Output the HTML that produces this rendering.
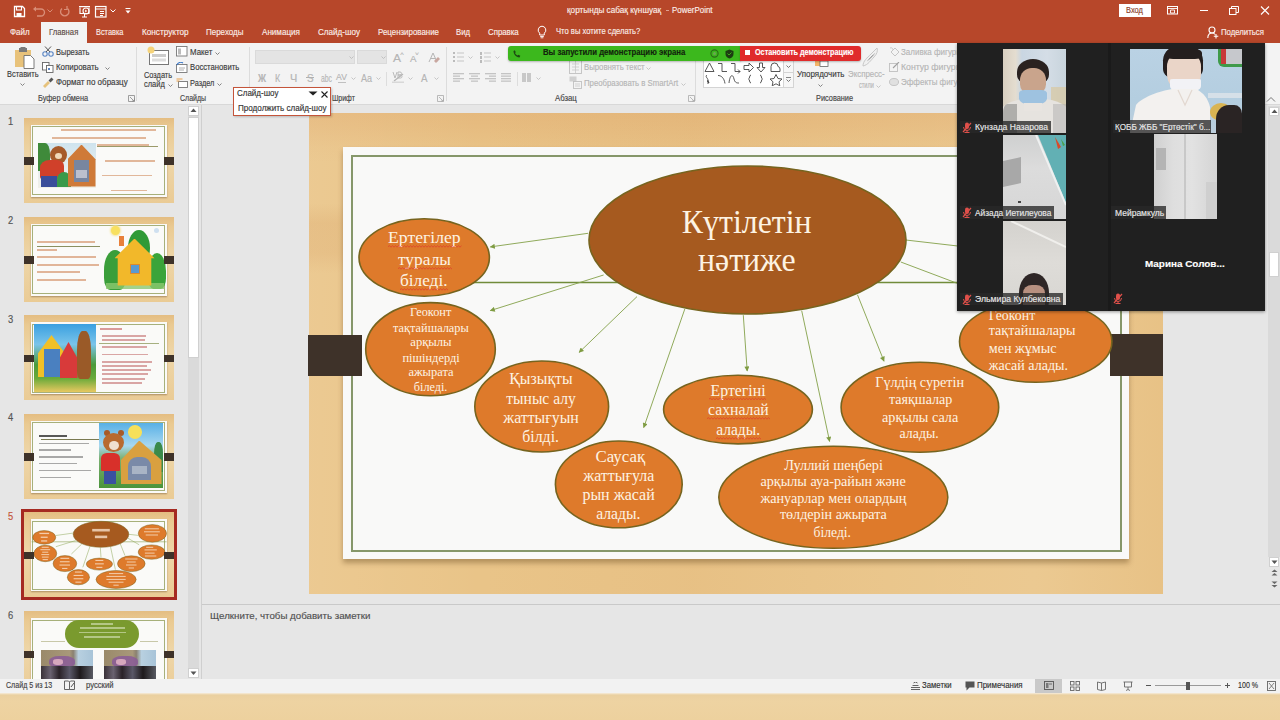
<!DOCTYPE html>
<html><head><meta charset="utf-8">
<style>
*{margin:0;padding:0;box-sizing:border-box}
html,body{width:1280px;height:720px;overflow:hidden;background:#e6e6e6;font-family:"Liberation Sans",sans-serif;position:relative}
.a{position:absolute}
.t{position:absolute;white-space:nowrap;line-height:1;transform-origin:0 0;-webkit-text-stroke:0.15px currentColor}
#wood{left:309px;top:113px;width:854px;height:481px;background-color:#e9c488;
 background-image:linear-gradient(180deg,rgba(214,140,80,.2) 0,rgba(214,140,80,.14) 14px,rgba(214,140,80,.04) 34px,rgba(214,140,80,0) 50px),
 linear-gradient(180deg,rgba(0,0,0,0) 90px,rgba(205,140,80,.16) 110px,rgba(205,140,80,.14) 140px,rgba(0,0,0,0) 160px),
 linear-gradient(90deg,rgba(255,240,215,.12) 0,rgba(255,240,215,0) 20%,rgba(200,130,70,.05) 45%,rgba(255,240,215,.06) 70%,rgba(255,245,225,.1) 85%,rgba(200,140,80,.04) 100%)}
#card{left:343px;top:147px;width:786px;height:412px;background:#f9f9f8;box-shadow:0 4px 5px rgba(90,60,20,.38)}
#gb{left:351px;top:155px;width:771px;height:397px;border:2px solid #86976a}
.tabk{background:#3e3229}
</style></head><body>
<div class="a" style="left:0px;top:105px;width:1280px;height:574px;background:#e6e6e6;"></div>
<div class="a" style="left:201px;top:105px;width:1px;height:574px;background:#cfcfcf;"></div>
<div class="a" style="left:188px;top:106px;width:11px;height:572px;background:#dadada;"></div>
<div class="a" style="left:188px;top:106px;width:11px;height:10px;background:#ffffff;border:1px solid #d0d0d0"></div>
<svg class="a" style="left:190px;top:108px;" width="7" height="5" viewBox="0 0 7 5"><path d="M0.5,4 L3.5,0.5 L6.5,4z" fill="#555"/></svg>
<div class="a" style="left:188px;top:117px;width:11px;height:241px;background:#ffffff;border:1px solid #d0d0d0"></div>
<div class="a" style="left:188px;top:668px;width:11px;height:10px;background:#ffffff;border:1px solid #d0d0d0"></div>
<svg class="a" style="left:190px;top:671px;" width="7" height="5" viewBox="0 0 7 5"><path d="M0.5,0.5 L3.5,4 L6.5,0.5z" fill="#555"/></svg>
<div class="a" style="left:1268px;top:106px;width:12px;height:451px;background:#dadada;"></div>
<div class="a" style="left:1269px;top:107px;width:10px;height:9px;background:#ffffff;border:1px solid #d0d0d0"></div>
<svg class="a" style="left:1271px;top:109px;" width="7" height="5" viewBox="0 0 7 5"><path d="M0.5,4 L3.5,0.5 L6.5,4z" fill="#555"/></svg>
<div class="a" style="left:1269px;top:252px;width:10px;height:25px;background:#ffffff;border:1px solid #d0d0d0"></div>
<div class="a" style="left:1269px;top:557px;width:10px;height:10px;background:#ffffff;border:1px solid #d0d0d0"></div>
<svg class="a" style="left:1271px;top:560px;" width="7" height="5" viewBox="0 0 7 5"><path d="M0.5,0.5 L3.5,4 L6.5,0.5z" fill="#555"/></svg>
<svg class="a" style="left:1271px;top:569px;" width="7" height="7" viewBox="0 0 7 7"><path d="M0.5,3 L3.5,0.5 L6.5,3z M0.5,6.5 L3.5,4 L6.5,6.5z" fill="#666"/></svg>
<svg class="a" style="left:1271px;top:581px;" width="7" height="7" viewBox="0 0 7 7"><path d="M0.5,0.5 L3.5,3 L6.5,0.5z M0.5,4 L3.5,6.5 L6.5,4z" fill="#666"/></svg>
<div class="a" style="left:202px;top:604px;width:1078px;height:1px;background:#c9c9c9;"></div>
<div class="t" style="left:209.90px;top:610.62px;font-size:9.6px;color:#505050;transform:scaleX(1.013);font-family:"Liberation Sans",sans-serif;">Щелкните, чтобы добавить заметки</div>
<div class="a" style="left:0px;top:679px;width:1280px;height:14px;background:#f2f2f2;"></div>
<div class="t" style="left:5.60px;top:681.47px;font-size:8.6px;color:#444;transform:scaleX(0.825);font-family:"Liberation Sans",sans-serif;">Слайд 5 из 13</div>
<svg class="a" style="left:64px;top:680px;" width="11" height="10" viewBox="0 0 11 10"><path d="M0.5,1 h4 l1,1 v7.5 h-5z M5.5,2 l1,-1 h4 v8.5 h-5" fill="none" stroke="#555" stroke-width="0.9"/><path d="M7,7 l3,-4" stroke="#555" stroke-width="1"/></svg>
<div class="t" style="left:86.25px;top:681.47px;font-size:8.6px;color:#444;transform:scaleX(0.891);font-family:"Liberation Sans",sans-serif;">русский</div>
<svg class="a" style="left:911px;top:682px;" width="9" height="9" viewBox="0 0 9 9"><path d="M0,7.5 h9 M0,5.5 h9 M1.5,3.5 h6 M2.5,1 l2,-1 l2,1" stroke="#555" stroke-width="0.9" fill="none"/></svg>
<div class="t" style="left:922.30px;top:681.47px;font-size:8.6px;color:#333;transform:scaleX(0.903);font-family:"Liberation Sans",sans-serif;">Заметки</div>
<svg class="a" style="left:965px;top:681px;" width="10" height="10" viewBox="0 0 10 10"><path d="M0.5,0.5 h9 v6 h-5 l-3,3 v-3 h-1z" fill="#555"/></svg>
<div class="t" style="left:976.60px;top:681.47px;font-size:8.6px;color:#333;transform:scaleX(0.920);font-family:"Liberation Sans",sans-serif;">Примечания</div>
<div class="a" style="left:1035px;top:679px;width:27px;height:14px;background:#c9c9c9;"></div>
<svg class="a" style="left:1044px;top:681px;" width="10" height="9" viewBox="0 0 10 9"><rect x="0.5" y="0.5" width="9" height="8" fill="none" stroke="#555" stroke-width="0.9"/><rect x="2" y="2" width="2.5" height="5" fill="#777"/><path d="M5,3 h3" stroke="#555" stroke-width="0.8"/></svg>
<svg class="a" style="left:1070px;top:681px;" width="10" height="10" viewBox="0 0 10 10"><rect x="0.5" y="0.5" width="3.5" height="3.5" fill="none" stroke="#666" stroke-width="0.9"/><rect x="6" y="0.5" width="3.5" height="3.5" fill="none" stroke="#666" stroke-width="0.9"/><rect x="0.5" y="6" width="3.5" height="3.5" fill="none" stroke="#666" stroke-width="0.9"/><rect x="6" y="6" width="3.5" height="3.5" fill="none" stroke="#666" stroke-width="0.9"/></svg>
<svg class="a" style="left:1097px;top:681px;" width="9" height="10" viewBox="0 0 9 10"><path d="M0.5,1 l4,1 l4,-1 v7.5 l-4,1 l-4,-1z M4.5,2 v7.5" fill="none" stroke="#666" stroke-width="0.9"/></svg>
<svg class="a" style="left:1123px;top:681px;" width="10" height="10" viewBox="0 0 10 10"><path d="M0.5,1 h9 M1.5,1 v5 h7 v-5 M5,6 v2.5 M3,9.5 l2,-1 l2,1" fill="none" stroke="#666" stroke-width="0.9"/></svg>
<div class="a" style="left:1146px;top:685px;width:5px;height:1px;background:#555;"></div>
<div class="a" style="left:1155px;top:685px;width:66px;height:1px;background:#9a9a9a;"></div>
<div class="a" style="left:1186px;top:682px;width:4px;height:8px;background:#555;"></div>
<div class="a" style="left:1225px;top:685px;width:5px;height:1px;background:#555;"></div>
<div class="a" style="left:1227px;top:683px;width:1px;height:5px;background:#555;"></div>
<div class="t" style="left:1238.30px;top:681.47px;font-size:8.6px;color:#333;transform:scaleX(0.828);font-family:"Liberation Sans",sans-serif;">100 %</div>
<svg class="a" style="left:1267px;top:681px;" width="9" height="10" viewBox="0 0 9 10"><rect x="0.5" y="0.5" width="8" height="9" fill="none" stroke="#666" stroke-width="0.9"/><path d="M2,2 l5,6 M7,2 l-5,6" stroke="#666" stroke-width="0.8"/></svg>
<div class="a" style="left:0px;top:693px;width:1280px;height:27px;background:#edd19f;background-image:linear-gradient(180deg,#f6ecdc 0,#ead0a0 2px,#eed3a2 8px,#edd19e 27px)"></div>
<div class="t" style="left:8.00px;top:116.73px;font-size:10px;color:#555;transform:scaleX(0.935);font-family:"Liberation Sans",sans-serif;">1</div>
<div class="t" style="left:8.00px;top:215.73px;font-size:10px;color:#555;transform:scaleX(0.935);font-family:"Liberation Sans",sans-serif;">2</div>
<div class="t" style="left:8.00px;top:314.74px;font-size:10px;color:#555;transform:scaleX(0.935);font-family:"Liberation Sans",sans-serif;">3</div>
<div class="t" style="left:8.00px;top:413.24px;font-size:10px;color:#555;transform:scaleX(0.935);font-family:"Liberation Sans",sans-serif;">4</div>
<div class="t" style="left:8.00px;top:511.74px;font-size:10px;color:#c4543a;transform:scaleX(0.935);font-family:"Liberation Sans",sans-serif;">5</div>
<div class="t" style="left:8.00px;top:610.74px;font-size:10px;color:#555;transform:scaleX(0.935);font-family:"Liberation Sans",sans-serif;">6</div>
<div class="a" style="left:23.5px;top:117.5px;width:150px;height:85px;overflow:hidden">
<div class="a" style="left:0;top:0;width:150px;height:85px;background:#eacb95;background-image:linear-gradient(180deg,#e4bd82 0,#eaca92 10px,#eed6a8 40px,#eacb95 85px),linear-gradient(90deg,rgba(255,255,255,.0),rgba(255,255,255,.15) 50%,rgba(255,255,255,0))"></div>
<div class="a" style="left:7px;top:7px;width:136px;height:72px;background:#fafaf8;box-shadow:0 1px 1.5px rgba(80,50,20,.4)"></div>
<div class="a" style="left:8.5px;top:8.5px;width:133px;height:69px;border:1px solid #a7b07a"></div>
<div class="a" style="left:37px;top:11.5px;width:95px;height:2px;background:#c8743c;opacity:.5"></div>
<div class="a" style="left:28px;top:19px;width:94px;height:2px;background:#c8743c;opacity:.5"></div>
<div class="a" style="left:73px;top:26.5px;width:52px;height:1.8px;background:#c8743c;opacity:.5"></div>
<div class="a" style="left:81px;top:42px;width:50px;height:2px;background:#c8743c;opacity:.5"></div>
<div class="a" style="left:78px;top:57px;width:50px;height:1.6px;background:#c8743c;opacity:.5"></div>
<div class="a" style="left:87px;top:72px;width:36px;height:1.1px;background:#c8743c;opacity:.5"></div>
<div class="a" style="left:73px;top:28.5px;width:61px;height:1px;background:#9b9a6a"></div>
<div class="a" style="left:14px;top:25px;width:58px;height:45px;background:linear-gradient(180deg,#cfe4ee 0,#e8eef0 60%,#f0f0e8 100%)"></div>
<div class="a" style="left:14px;top:25px;width:12px;height:28px;background:#3f8a3a;border-radius:0 40% 30% 0"></div>
<div class="a" style="left:26px;top:28px;width:17px;height:18px;background:#a65a2a;border-radius:50%"></div>
<div class="a" style="left:31px;top:35px;width:7px;height:6px;background:#f0d8b8;border-radius:50%"></div>
<div class="a" style="left:16px;top:42px;width:24px;height:19px;background:#d0402a;border-radius:40% 30% 10% 10%"></div>
<div class="a" style="left:17px;top:58px;width:16px;height:11px;background:#3a4e9a"></div>
<div class="a" style="left:33px;top:54px;width:14px;height:15px;background:#3a9a4a;border-radius:50% 50% 0 0"></div>
<div class="a" style="left:44px;top:27px;width:28px;height:42px;background:#cf7a38;clip-path:polygon(50% 0,100% 35%,100% 100%,0 100%,0 35%)"></div>
<div class="a" style="left:50px;top:42px;width:15px;height:22px;background:#7886a0"></div>
<div class="a" style="left:52px;top:52px;width:11px;height:8px;background:#d8d8e0;opacity:.7"></div>
<div class="a" style="left:0;top:39.5px;width:10px;height:7.5px;background:#3e3229"></div>
<div class="a" style="left:140.5px;top:39.5px;width:9.5px;height:7.5px;background:#3e3229"></div>
</div>
<div class="a" style="left:23.5px;top:216.5px;width:150px;height:85px;overflow:hidden">
<div class="a" style="left:0;top:0;width:150px;height:85px;background:#eacb95;background-image:linear-gradient(180deg,#e4bd82 0,#eaca92 10px,#eed6a8 40px,#eacb95 85px),linear-gradient(90deg,rgba(255,255,255,.0),rgba(255,255,255,.15) 50%,rgba(255,255,255,0))"></div>
<div class="a" style="left:7px;top:7px;width:136px;height:72px;background:#fafaf8;box-shadow:0 1px 1.5px rgba(80,50,20,.4)"></div>
<div class="a" style="left:8.5px;top:8.5px;width:133px;height:69px;border:1px solid #a7b07a"></div>
<div class="a" style="left:13.5px;top:24.5px;width:58.0px;height:2.4px;background:#c8703a;opacity:.5"></div>
<div class="a" style="left:13.5px;top:32px;width:20.0px;height:2.2px;background:#c8703a;opacity:.5"></div>
<div class="a" style="left:13.5px;top:39.5px;width:59.0px;height:2.4px;background:#c8703a;opacity:.5"></div>
<div class="a" style="left:13.5px;top:47px;width:62.0px;height:2.4px;background:#c8703a;opacity:.5"></div>
<div class="a" style="left:13.5px;top:54.5px;width:43.0px;height:2.2px;background:#c8703a;opacity:.5"></div>
<div class="a" style="left:13.5px;top:62px;width:49.0px;height:2.2px;background:#c8703a;opacity:.5"></div>
<div class="a" style="left:13.5px;top:29.5px;width:63px;height:1px;background:#8a9060"></div>
<div class="a" style="left:80px;top:33px;width:22px;height:40px;background:#3a9e3a;border-radius:50% 50% 30% 30%"></div>
<div class="a" style="left:104px;top:13px;width:22px;height:36px;background:#2f9a36;border-radius:50%"></div>
<div class="a" style="left:124px;top:36px;width:18px;height:36px;background:#3aa43a;border-radius:50% 50% 30% 30%"></div>
<div class="a" style="left:82px;top:66px;width:58px;height:6px;background:#8cc870;opacity:.8"></div>
<div class="a" style="left:91px;top:22px;width:40px;height:47px;background:#f2b82a;clip-path:polygon(50% 0,100% 42%,92% 42%,92% 100%,8% 100%,8% 42%,0 42%)"></div>
<div class="a" style="left:95px;top:19px;width:5px;height:10px;background:#e8803a"></div>
<div class="a" style="left:106px;top:47px;width:10px;height:10px;background:#5a9ad0;border:1.5px solid #e08a2a"></div>
<div class="a" style="left:87px;top:9px;width:9px;height:9px;background:#f8e060;border-radius:50%;box-shadow:0 0 2px 1px #f6e6a0"></div>
<div class="a" style="left:130px;top:11px;width:5px;height:5px;background:#cfe0f0;border-radius:50%"></div>
<div class="a" style="left:0;top:39.5px;width:10px;height:7.5px;background:#3e3229"></div>
<div class="a" style="left:140.5px;top:39.5px;width:9.5px;height:7.5px;background:#3e3229"></div>
</div>
<div class="a" style="left:23.5px;top:315px;width:150px;height:85px;overflow:hidden">
<div class="a" style="left:0;top:0;width:150px;height:85px;background:#eacb95;background-image:linear-gradient(180deg,#e4bd82 0,#eaca92 10px,#eed6a8 40px,#eacb95 85px),linear-gradient(90deg,rgba(255,255,255,.0),rgba(255,255,255,.15) 50%,rgba(255,255,255,0))"></div>
<div class="a" style="left:7px;top:7px;width:136px;height:72px;background:#fafaf8;box-shadow:0 1px 1.5px rgba(80,50,20,.4)"></div>
<div class="a" style="left:8.5px;top:8.5px;width:133px;height:69px;border:1px solid #a7b07a"></div>
<div class="a" style="left:10px;top:9px;width:62px;height:68px;background:linear-gradient(180deg,#3aa0e0 0,#7ac4ea 30%,#4a9a3a 60%,#6aaa3a 80%,#e8c860 100%)"></div>
<div class="a" style="left:14px;top:20px;width:28px;height:42px;background:#f0c028;clip-path:polygon(50% 0,100% 45%,100% 100%,0 100%,0 45%)"></div>
<div class="a" style="left:20px;top:34px;width:16px;height:28px;background:#4a80c0"></div>
<div class="a" style="left:36px;top:27px;width:18px;height:36px;background:#d83a3a;clip-path:polygon(50% 0,100% 45%,100% 100%,0 100%,0 45%)"></div>
<div class="a" style="left:53px;top:16px;width:14px;height:48px;background:#9a5a28;border-radius:40% 40% 20% 20%"></div>
<div class="a" style="left:76px;top:13px;width:22px;height:2.4px;background:#b83a3a;opacity:.5"></div>
<div class="a" style="left:78px;top:20px;width:44px;height:1.8px;background:#b85050;opacity:.5"></div>
<div class="a" style="left:78px;top:24px;width:43px;height:1.8px;background:#b85050;opacity:.5"></div>
<div class="a" style="left:78px;top:31px;width:45px;height:1.8px;background:#b85050;opacity:.5"></div>
<div class="a" style="left:78px;top:38.5px;width:46px;height:1.8px;background:#b85050;opacity:.5"></div>
<div class="a" style="left:78px;top:46px;width:50px;height:1.8px;background:#b85050;opacity:.5"></div>
<div class="a" style="left:78px;top:50px;width:45px;height:1.8px;background:#b85050;opacity:.5"></div>
<div class="a" style="left:78px;top:54px;width:49px;height:1.8px;background:#b85050;opacity:.5"></div>
<div class="a" style="left:78px;top:58px;width:46px;height:1.8px;background:#b85050;opacity:.5"></div>
<div class="a" style="left:78px;top:63px;width:43px;height:1.8px;background:#b85050;opacity:.5"></div>
<div class="a" style="left:78px;top:67px;width:40px;height:1.8px;background:#b85050;opacity:.5"></div>
<div class="a" style="left:75px;top:28px;width:60px;height:1px;background:#a6b080"></div>
<div class="a" style="left:0;top:39.5px;width:10px;height:7.5px;background:#3e3229"></div>
<div class="a" style="left:140.5px;top:39.5px;width:9.5px;height:7.5px;background:#3e3229"></div>
</div>
<div class="a" style="left:23.5px;top:413.5px;width:150px;height:85px;overflow:hidden">
<div class="a" style="left:0;top:0;width:150px;height:85px;background:#eacb95;background-image:linear-gradient(180deg,#e4bd82 0,#eaca92 10px,#eed6a8 40px,#eacb95 85px),linear-gradient(90deg,rgba(255,255,255,.0),rgba(255,255,255,.15) 50%,rgba(255,255,255,0))"></div>
<div class="a" style="left:7px;top:7px;width:136px;height:72px;background:#fafaf8;box-shadow:0 1px 1.5px rgba(80,50,20,.4)"></div>
<div class="a" style="left:8.5px;top:8.5px;width:133px;height:69px;border:1px solid #a7b07a"></div>
<div class="a" style="left:15.5px;top:21px;width:28px;height:2.6px;background:#222;opacity:.75"></div>
<div class="a" style="left:17px;top:25.5px;width:58px;height:1px;background:#7a7a50"></div>
<div class="a" style="left:15.25px;top:29px;width:50.650000000000006px;height:1.8px;background:#555;opacity:.5"></div>
<div class="a" style="left:15.25px;top:35.5px;width:32.65px;height:1.8px;background:#555;opacity:.5"></div>
<div class="a" style="left:15.25px;top:42.5px;width:43.75px;height:1.8px;background:#555;opacity:.5"></div>
<div class="a" style="left:15.25px;top:49px;width:38.25px;height:1.8px;background:#555;opacity:.5"></div>
<div class="a" style="left:15.25px;top:56px;width:52.05px;height:1.8px;background:#555;opacity:.5"></div>
<div class="a" style="left:16.5px;top:63px;width:30.700000000000003px;height:1.8px;background:#555;opacity:.5"></div>
<div class="a" style="left:75.7px;top:9.2px;width:63.8px;height:65.8px;background:linear-gradient(180deg,#58b0e6 0,#a8d8f0 35%,#7ab070 55%,#4a943a 100%)"></div>
<div class="a" style="left:130px;top:28px;width:9px;height:30px;background:#3a8a4a;border-radius:40% 40% 0 0"></div>
<div class="a" style="left:104.5px;top:11.5px;width:14px;height:13.5px;background:#f6e05a;border-radius:50%"></div>
<div class="a" style="left:80px;top:16px;width:6px;height:6px;background:#a85a28;border-radius:50%"></div>
<div class="a" style="left:94px;top:16px;width:6px;height:6px;background:#a85a28;border-radius:50%"></div>
<div class="a" style="left:79.5px;top:19.5px;width:21px;height:19px;background:#b86a30;border-radius:50%"></div>
<div class="a" style="left:85px;top:27px;width:10px;height:9px;background:#f0e0d0;border-radius:50%"></div>
<div class="a" style="left:77px;top:39.5px;width:19.5px;height:18px;background:#d8302a;border-radius:30% 30% 5% 5%"></div>
<div class="a" style="left:80px;top:57.5px;width:12px;height:13px;background:#3a50a0"></div>
<div class="a" style="left:97.5px;top:27px;width:40.5px;height:43.5px;background:#d9a040;clip-path:polygon(45% 0,100% 45%,100% 100%,0 100%,0 45%)"></div>
<div class="a" style="left:104.5px;top:43.5px;width:22.5px;height:23px;background:#7a8aa8;border-radius:40% 40% 0 0"></div>
<div class="a" style="left:108px;top:52px;width:15px;height:8px;background:#c8d0d8;opacity:.6"></div>
<div class="a" style="left:0;top:39.5px;width:10px;height:7.5px;background:#3e3229"></div>
<div class="a" style="left:140.5px;top:39.5px;width:9.5px;height:7.5px;background:#3e3229"></div>
</div>
<div class="a" style="left:21px;top:509px;width:156px;height:91px;background:#a52a22;"></div>
<div class="a" style="left:23.5px;top:512px;width:150px;height:85px;overflow:hidden">
<div class="a" style="left:0;top:0;width:150px;height:85px;background:#eacb95;background-image:linear-gradient(180deg,#e4bd82 0,#eaca92 10px,#eed6a8 40px,#eacb95 85px),linear-gradient(90deg,rgba(255,255,255,.0),rgba(255,255,255,.15) 50%,rgba(255,255,255,0))"></div>
<div class="a" style="left:7px;top:7px;width:136px;height:72px;background:#fafaf8;box-shadow:0 1px 1.5px rgba(80,50,20,.4)"></div>
<div class="a" style="left:8.5px;top:8.5px;width:133px;height:69px;border:1px solid #a7b07a"></div>
<svg class="a" style="left:0;top:0" width="150" height="85" viewBox="0 0 150 85"><line x1="7.6" y1="29.8" x2="142.6" y2="29.8" stroke="#8aa050" stroke-width="0.6"/><line x1="49.0" y1="21.1" x2="31.8" y2="23.5" stroke="#8aa552" stroke-width="0.5"/><line x1="51.7" y1="28.5" x2="31.8" y2="34.7" stroke="#8aa552" stroke-width="0.5"/><line x1="57.6" y1="32.2" x2="47.4" y2="42.0" stroke="#8aa552" stroke-width="0.5"/><line x1="66.0" y1="34.4" x2="58.8" y2="55.3" stroke="#8aa552" stroke-width="0.5"/><line x1="76.3" y1="35.5" x2="77.0" y2="45.3" stroke="#8aa552" stroke-width="0.5"/><line x1="86.5" y1="34.7" x2="91.4" y2="57.7" stroke="#8aa552" stroke-width="0.5"/><line x1="96.3" y1="31.9" x2="101.0" y2="43.6" stroke="#8aa552" stroke-width="0.5"/><line x1="104.8" y1="22.3" x2="114.3" y2="23.4" stroke="#8aa552" stroke-width="0.5"/><line x1="103.9" y1="26.2" x2="115.2" y2="32.8" stroke="#8aa552" stroke-width="0.5"/><ellipse cx="77.0" cy="22.3" rx="27.8" ry="13.0" fill="#a65a1f" stroke="#7a6420" stroke-width="0.5"/><ellipse cx="20.2" cy="25.4" rx="11.5" ry="6.8" fill="#de7a2b" stroke="#7a6420" stroke-width="0.5"/><ellipse cx="21.3" cy="41.5" rx="11.4" ry="8.2" fill="#de7a2b" stroke="#7a6420" stroke-width="0.5"/><ellipse cx="40.9" cy="51.6" rx="11.8" ry="8.0" fill="#de7a2b" stroke="#7a6420" stroke-width="0.5"/><ellipse cx="54.4" cy="65.2" rx="11.1" ry="7.6" fill="#de7a2b" stroke="#7a6420" stroke-width="0.5"/><ellipse cx="75.4" cy="52.1" rx="13.1" ry="6.0" fill="#de7a2b" stroke="#7a6420" stroke-width="0.5"/><ellipse cx="107.3" cy="51.7" rx="13.8" ry="7.9" fill="#de7a2b" stroke="#7a6420" stroke-width="0.5"/><ellipse cx="92.1" cy="67.5" rx="20.1" ry="9.0" fill="#de7a2b" stroke="#7a6420" stroke-width="0.5"/><ellipse cx="127.6" cy="40.1" rx="13.4" ry="7.2" fill="#de7a2b" stroke="#7a6420" stroke-width="0.5"/><ellipse cx="128.4" cy="21.4" rx="14.1" ry="8.8" fill="#de7a2b" stroke="#7a6420" stroke-width="0.5"/><rect x="68.2" y="16.9" width="17.6" height="2.6" fill="#fbe8d6" opacity=".75"/><rect x="70.9" y="23.6" width="12.3" height="2.6" fill="#fbe8d6" opacity=".75"/><rect x="15.4" y="20.8" width="9.7" height="1.3" fill="#fbe8d6" opacity=".75"/><rect x="16.7" y="24.6" width="7.0" height="1.3" fill="#fbe8d6" opacity=".75"/><rect x="17.1" y="28.3" width="6.1" height="1.3" fill="#fbe8d6" opacity=".75"/><rect x="17.7" y="34.8" width="7.0" height="1.0" fill="#fbe8d6" opacity=".75"/><rect x="16.4" y="37.2" width="9.7" height="1.0" fill="#fbe8d6" opacity=".75"/><rect x="18.2" y="39.7" width="6.1" height="1.0" fill="#fbe8d6" opacity=".75"/><rect x="17.3" y="42.1" width="7.9" height="1.0" fill="#fbe8d6" opacity=".75"/><rect x="17.9" y="44.6" width="6.7" height="1.0" fill="#fbe8d6" opacity=".75"/><rect x="18.6" y="47.1" width="5.3" height="1.0" fill="#fbe8d6" opacity=".75"/><rect x="36.4" y="45.8" width="8.8" height="1.1" fill="#fbe8d6" opacity=".75"/><rect x="35.9" y="49.2" width="9.7" height="1.1" fill="#fbe8d6" opacity=".75"/><rect x="35.5" y="52.5" width="10.5" height="1.1" fill="#fbe8d6" opacity=".75"/><rect x="38.1" y="55.9" width="5.3" height="1.1" fill="#fbe8d6" opacity=".75"/><rect x="50.9" y="59.5" width="7.0" height="1.1" fill="#fbe8d6" opacity=".75"/><rect x="49.6" y="62.9" width="9.7" height="1.1" fill="#fbe8d6" opacity=".75"/><rect x="49.6" y="66.2" width="9.7" height="1.1" fill="#fbe8d6" opacity=".75"/><rect x="51.4" y="69.6" width="6.1" height="1.1" fill="#fbe8d6" opacity=".75"/><rect x="71.4" y="47.9" width="7.9" height="1.1" fill="#fbe8d6" opacity=".75"/><rect x="71.0" y="51.3" width="8.8" height="1.1" fill="#fbe8d6" opacity=".75"/><rect x="72.3" y="54.8" width="6.1" height="1.1" fill="#fbe8d6" opacity=".75"/><rect x="101.2" y="46.5" width="12.3" height="1.0" fill="#fbe8d6" opacity=".75"/><rect x="102.9" y="49.5" width="8.8" height="1.0" fill="#fbe8d6" opacity=".75"/><rect x="102.0" y="52.5" width="10.5" height="1.0" fill="#fbe8d6" opacity=".75"/><rect x="104.7" y="55.5" width="5.3" height="1.0" fill="#fbe8d6" opacity=".75"/><rect x="85.0" y="61.1" width="14.1" height="1.0" fill="#fbe8d6" opacity=".75"/><rect x="82.4" y="63.9" width="19.3" height="1.0" fill="#fbe8d6" opacity=".75"/><rect x="82.4" y="66.9" width="19.3" height="1.0" fill="#fbe8d6" opacity=".75"/><rect x="84.6" y="69.7" width="14.9" height="1.0" fill="#fbe8d6" opacity=".75"/><rect x="89.4" y="72.7" width="5.3" height="1.0" fill="#fbe8d6" opacity=".75"/><rect x="122.2" y="34.8" width="7.0" height="1.0" fill="#fbe8d6" opacity=".75"/><rect x="120.5" y="37.4" width="12.3" height="1.0" fill="#fbe8d6" opacity=".75"/><rect x="120.9" y="40.6" width="9.7" height="1.0" fill="#fbe8d6" opacity=".75"/><rect x="120.9" y="43.5" width="11.4" height="1.0" fill="#fbe8d6" opacity=".75"/><rect x="120.8" y="16.3" width="14.1" height="1.0" fill="#fbe8d6" opacity=".75"/><rect x="120.0" y="19.3" width="15.8" height="1.0" fill="#fbe8d6" opacity=".75"/><rect x="121.7" y="22.5" width="12.3" height="1.0" fill="#fbe8d6" opacity=".75"/></svg>
<div class="a" style="left:0;top:39.5px;width:10px;height:7.5px;background:#3e3229"></div>
<div class="a" style="left:140.5px;top:39.5px;width:9.5px;height:7.5px;background:#3e3229"></div>
</div>
<div class="a" style="left:23.5px;top:611px;width:150px;height:68px;overflow:hidden">
<div class="a" style="left:0;top:0;width:150px;height:85px;background:#eacb95;background-image:linear-gradient(180deg,#e4bd82 0,#eaca92 10px,#eed6a8 40px,#eacb95 85px),linear-gradient(90deg,rgba(255,255,255,.0),rgba(255,255,255,.15) 50%,rgba(255,255,255,0))"></div>
<div class="a" style="left:7px;top:7px;width:136px;height:72px;background:#fafaf8;box-shadow:0 1px 1.5px rgba(80,50,20,.4)"></div>
<div class="a" style="left:8.5px;top:8.5px;width:133px;height:69px;border:1px solid #a7b07a"></div>
<div class="a" style="left:41.5px;top:9px;width:74px;height:27.5px;background:#7a9a2e;border-radius:14px"></div>
<div class="a" style="left:67.5px;top:11.5px;width:22.0px;height:2px;background:#eef4dc;opacity:.5"></div>
<div class="a" style="left:56px;top:16px;width:45px;height:1.5px;background:#eef4dc;opacity:.5"></div>
<div class="a" style="left:55px;top:20.5px;width:47px;height:1.5px;background:#eef4dc;opacity:.5"></div>
<div class="a" style="left:60.5px;top:25px;width:36.0px;height:1.5px;background:#eef4dc;opacity:.5"></div>
<div class="a" style="left:17.5px;top:29.5px;width:24px;height:1.2px;background:#c8c8a8"></div>
<div class="a" style="left:116px;top:29.5px;width:18px;height:1.2px;background:#c8c8a8"></div>
<div class="a" style="left:17.5px;top:39px;width:52px;height:40px;background:linear-gradient(90deg,#9a8a6a 0,#a8987a 55%,#8a8070 62%,#b8d0e0 72%,#a8c4d8 100%)"></div>
<div class="a" style="left:25.5px;top:45px;width:26px;height:12px;background:#8a5a98;border-radius:40%;opacity:.85"></div>
<div class="a" style="left:29.5px;top:48px;width:10px;height:6px;background:#e8b8c8;border-radius:40%;opacity:.8"></div>
<div class="a" style="left:17.5px;top:55px;width:52px;height:24px;background:linear-gradient(90deg,#3a3238 0,#6a6270 18%,#2a2228 35%,#5a5868 55%,#1e1a1c 75%,#585a62 100%)"></div>
<div class="a" style="left:80.5px;top:39px;width:52px;height:40px;background:linear-gradient(90deg,#9a8a6a 0,#a8987a 55%,#8a8070 62%,#b8d0e0 72%,#a8c4d8 100%)"></div>
<div class="a" style="left:88.5px;top:45px;width:26px;height:12px;background:#8a5a98;border-radius:40%;opacity:.85"></div>
<div class="a" style="left:92.5px;top:48px;width:10px;height:6px;background:#e8b8c8;border-radius:40%;opacity:.8"></div>
<div class="a" style="left:80.5px;top:55px;width:52px;height:24px;background:linear-gradient(90deg,#3a3238 0,#6a6270 18%,#2a2228 35%,#5a5868 55%,#1e1a1c 75%,#585a62 100%)"></div>
<div class="a" style="left:0;top:39.5px;width:10px;height:7.5px;background:#3e3229"></div>
<div class="a" style="left:140.5px;top:39.5px;width:9.5px;height:7.5px;background:#3e3229"></div>
</div>
<div id="wood" class="a"></div>
<div id="card" class="a"></div>
<div id="gb" class="a"></div>
<div class="a tabk" style="left:308px;top:335px;width:54px;height:41px"></div>
<div class="a tabk" style="left:1110px;top:334px;width:53px;height:42px"></div>
<svg class="a" style="left:309px;top:113px" width="854" height="481" viewBox="309 113 854 481">
<defs><marker id="ah" viewBox="0 0 10 10" refX="9" refY="5" markerWidth="6" markerHeight="5" markerUnits="userSpaceOnUse" orient="auto"><path d="M0,0 L10,5 L0,10 z" fill="#7f9c42"/></marker></defs>
<line x1="430" y1="282.5" x2="1121" y2="282.5" stroke="#718c3a" stroke-width="1.6"/>
<line x1="588" y1="233.3" x2="490.3" y2="246.9" stroke="#8aa552" stroke-width="0.95" marker-end="url(#ah)"/>
<line x1="603.6" y1="275" x2="490.3" y2="310.6" stroke="#8aa552" stroke-width="0.95" marker-end="url(#ah)"/>
<line x1="637" y1="296.6" x2="579.1" y2="352.4" stroke="#8aa552" stroke-width="0.95" marker-end="url(#ah)"/>
<line x1="684.8" y1="309" x2="643.7" y2="427.6" stroke="#8aa552" stroke-width="0.95" marker-end="url(#ah)"/>
<line x1="743.3" y1="315.2" x2="747.2" y2="371" stroke="#8aa552" stroke-width="0.95" marker-end="url(#ah)"/>
<line x1="801.7" y1="310.7" x2="829.6" y2="441.4" stroke="#8aa552" stroke-width="0.95" marker-end="url(#ah)"/>
<line x1="857.5" y1="294.8" x2="884" y2="361.2" stroke="#8aa552" stroke-width="0.95" marker-end="url(#ah)"/>
<line x1="905.8" y1="240" x2="975" y2="248" stroke="#8aa552" stroke-width="0.95"/>
<line x1="900.8" y1="262" x2="975" y2="290" stroke="#8aa552" stroke-width="0.95"/>
<ellipse cx="747.5" cy="240" rx="158.5" ry="74" fill="#a65a1f" stroke="#76641f" stroke-width="1.6"/>
<ellipse cx="424.2" cy="257.5" rx="65.2" ry="38.75" fill="#de7a2b" stroke="#76641f" stroke-width="1.6"/>
<ellipse cx="430.5" cy="349.2" rx="64.8" ry="46.6" fill="#de7a2b" stroke="#76641f" stroke-width="1.6"/>
<ellipse cx="541.7" cy="406.5" rx="66.9" ry="45.5" fill="#de7a2b" stroke="#76641f" stroke-width="1.6"/>
<ellipse cx="618.8" cy="484.4" rx="63.4" ry="43.4" fill="#de7a2b" stroke="#76641f" stroke-width="1.6"/>
<ellipse cx="738" cy="409.6" rx="74.4" ry="34.3" fill="#de7a2b" stroke="#76641f" stroke-width="1.6"/>
<ellipse cx="919.9" cy="407.3" rx="78.8" ry="45" fill="#de7a2b" stroke="#76641f" stroke-width="1.6"/>
<ellipse cx="833.3" cy="497.3" rx="114.5" ry="51" fill="#de7a2b" stroke="#76641f" stroke-width="1.6"/>
<ellipse cx="1035.7" cy="341.5" rx="76.2" ry="40.8" fill="#de7a2b" stroke="#76641f" stroke-width="1.6"/>
<ellipse cx="1037" cy="235" rx="79" ry="48" fill="#de7a2b" stroke="#76641f" stroke-width="1.6"/>
<text x="681.8" y="232.9" textLength="129.8" lengthAdjust="spacingAndGlyphs" font-size="33" fill="#fdf3e3" font-family="Liberation Serif, serif">Күтілетін</text>
<text x="698" y="271.3" textLength="97.7" lengthAdjust="spacingAndGlyphs" font-size="33" fill="#fdf3e3" font-family="Liberation Serif, serif">нәтиже</text>
<text x="388.1" y="243.1" textLength="72.5" lengthAdjust="spacingAndGlyphs" font-size="17" fill="#fdf3e3" font-family="Liberation Serif, serif">Ертегілер</text>
<text x="398" y="265" textLength="53.0" lengthAdjust="spacingAndGlyphs" font-size="17" fill="#fdf3e3" font-family="Liberation Serif, serif">туралы</text>
<text x="400" y="286.25" textLength="47.5" lengthAdjust="spacingAndGlyphs" font-size="17" fill="#fdf3e3" font-family="Liberation Serif, serif">біледі.</text>
<text x="410" y="316.4" textLength="41.3" lengthAdjust="spacingAndGlyphs" font-size="13.5" fill="#fdf3e3" font-family="Liberation Serif, serif">Геоконт</text>
<text x="393" y="331.7" textLength="75.8" lengthAdjust="spacingAndGlyphs" font-size="13.5" fill="#fdf3e3" font-family="Liberation Serif, serif">тақтайшалары</text>
<text x="410.3" y="346.2" textLength="41.3" lengthAdjust="spacingAndGlyphs" font-size="13.5" fill="#fdf3e3" font-family="Liberation Serif, serif">арқылы</text>
<text x="402.4" y="361.5" textLength="57.3" lengthAdjust="spacingAndGlyphs" font-size="13.5" fill="#fdf3e3" font-family="Liberation Serif, serif">пішіндерді</text>
<text x="408.5" y="376" textLength="45.0" lengthAdjust="spacingAndGlyphs" font-size="13.5" fill="#fdf3e3" font-family="Liberation Serif, serif">ажырата</text>
<text x="413.8" y="390.5" textLength="33.6" lengthAdjust="spacingAndGlyphs" font-size="13.5" fill="#fdf3e3" font-family="Liberation Serif, serif">біледі.</text>
<text x="509.3" y="383.9" textLength="63.4" lengthAdjust="spacingAndGlyphs" font-size="16.5" fill="#fdf3e3" font-family="Liberation Serif, serif">Қызықты</text>
<text x="506.3" y="403.5" textLength="69.5" lengthAdjust="spacingAndGlyphs" font-size="16.5" fill="#fdf3e3" font-family="Liberation Serif, serif">тыныс алу</text>
<text x="503.2" y="422.6" textLength="75.6" lengthAdjust="spacingAndGlyphs" font-size="16.5" fill="#fdf3e3" font-family="Liberation Serif, serif">жаттығуын</text>
<text x="522.3" y="441.7" textLength="36.7" lengthAdjust="spacingAndGlyphs" font-size="16.5" fill="#fdf3e3" font-family="Liberation Serif, serif">білді.</text>
<text x="595.4" y="462" textLength="49.7" lengthAdjust="spacingAndGlyphs" font-size="16.5" fill="#fdf3e3" font-family="Liberation Serif, serif">Саусақ</text>
<text x="583.2" y="481.2" textLength="71.0" lengthAdjust="spacingAndGlyphs" font-size="16.5" fill="#fdf3e3" font-family="Liberation Serif, serif">жаттығула</text>
<text x="582.4" y="500.3" textLength="72.3" lengthAdjust="spacingAndGlyphs" font-size="16.5" fill="#fdf3e3" font-family="Liberation Serif, serif">рын жасай</text>
<text x="596.2" y="519.4" textLength="44.3" lengthAdjust="spacingAndGlyphs" font-size="16.5" fill="#fdf3e3" font-family="Liberation Serif, serif">алады.</text>
<text x="710.6" y="395.6" textLength="55.0" lengthAdjust="spacingAndGlyphs" font-size="16.5" fill="#fdf3e3" font-family="Liberation Serif, serif">Ертегіні</text>
<text x="708" y="415" textLength="60.8" lengthAdjust="spacingAndGlyphs" font-size="16.5" fill="#fdf3e3" font-family="Liberation Serif, serif">сахналай</text>
<text x="716.25" y="435" textLength="43.8" lengthAdjust="spacingAndGlyphs" font-size="16.5" fill="#fdf3e3" font-family="Liberation Serif, serif">алады.</text>
<text x="875.2" y="387.3" textLength="88.9" lengthAdjust="spacingAndGlyphs" font-size="15" fill="#fdf3e3" font-family="Liberation Serif, serif">Гүлдің суретін</text>
<text x="888.9" y="404" textLength="63.5" lengthAdjust="spacingAndGlyphs" font-size="15" fill="#fdf3e3" font-family="Liberation Serif, serif">таяқшалар</text>
<text x="882" y="421.5" textLength="76.2" lengthAdjust="spacingAndGlyphs" font-size="15" fill="#fdf3e3" font-family="Liberation Serif, serif">арқылы сала</text>
<text x="899.6" y="438" textLength="39.1" lengthAdjust="spacingAndGlyphs" font-size="15" fill="#fdf3e3" font-family="Liberation Serif, serif">алады.</text>
<text x="784.2" y="470.2" textLength="98.7" lengthAdjust="spacingAndGlyphs" font-size="15" fill="#fdf3e3" font-family="Liberation Serif, serif">Луллий шеңбері</text>
<text x="760.4" y="486.2" textLength="145.3" lengthAdjust="spacingAndGlyphs" font-size="15" fill="#fdf3e3" font-family="Liberation Serif, serif">арқылы ауа-райын және</text>
<text x="760.4" y="503.4" textLength="145.9" lengthAdjust="spacingAndGlyphs" font-size="15" fill="#fdf3e3" font-family="Liberation Serif, serif">жануарлар мен олардың</text>
<text x="779.9" y="519.4" textLength="106.9" lengthAdjust="spacingAndGlyphs" font-size="15" fill="#fdf3e3" font-family="Liberation Serif, serif">төлдерін ажырата</text>
<text x="813.5" y="536.6" textLength="37.5" lengthAdjust="spacingAndGlyphs" font-size="15" fill="#fdf3e3" font-family="Liberation Serif, serif">біледі.</text>
<text x="988.75" y="319.7" textLength="46.5" lengthAdjust="spacingAndGlyphs" font-size="15" fill="#fdf3e3" font-family="Liberation Serif, serif">Геоконт</text>
<text x="988.75" y="335.3" textLength="86.8" lengthAdjust="spacingAndGlyphs" font-size="15" fill="#fdf3e3" font-family="Liberation Serif, serif">тақтайшалары</text>
<text x="988.75" y="353.3" textLength="67.7" lengthAdjust="spacingAndGlyphs" font-size="15" fill="#fdf3e3" font-family="Liberation Serif, serif">мен жұмыс</text>
<text x="988.75" y="369.7" textLength="79.3" lengthAdjust="spacingAndGlyphs" font-size="15" fill="#fdf3e3" font-family="Liberation Serif, serif">жасай алады.</text>
<path d="M388.0,246.5 L389.5,245.8 L391.0,247.2 L392.5,245.8 L394.0,247.2 L395.5,245.8 L397.0,247.2 L398.5,245.8 L400.0,247.2 L401.5,245.8 L403.0,247.2 L404.5,245.8 L406.0,247.2 L407.5,245.8 L409.0,247.2 L410.5,245.8 L412.0,247.2 L413.5,245.8 L415.0,247.2 L416.5,245.8 L418.0,247.2 L419.5,245.8 L421.0,247.2 L422.5,245.8 L424.0,247.2 L425.5,245.8 L427.0,247.2 L428.5,245.8 L430.0,247.2 L431.5,245.8 L433.0,247.2 L434.5,245.8 L436.0,247.2 L437.5,245.8 L439.0,247.2 L440.5,245.8 L442.0,247.2 L443.5,245.8 L445.0,247.2 L446.5,245.8 L448.0,247.2 L449.5,245.8 L451.0,247.2 L452.5,245.8 L454.0,247.2 L455.5,245.8 L457.0,247.2 L458.5,245.8 L460.0,247.2 L461.5,245.8" stroke="#e0322a" stroke-width="0.8" fill="none" opacity="0.8"/>
<path d="M398.0,268.5 L399.5,267.8 L401.0,269.2 L402.5,267.8 L404.0,269.2 L405.5,267.8 L407.0,269.2 L408.5,267.8 L410.0,269.2 L411.5,267.8 L413.0,269.2 L414.5,267.8 L416.0,269.2 L417.5,267.8 L419.0,269.2 L420.5,267.8 L422.0,269.2 L423.5,267.8 L425.0,269.2 L426.5,267.8 L428.0,269.2 L429.5,267.8 L431.0,269.2 L432.5,267.8 L434.0,269.2 L435.5,267.8 L437.0,269.2 L438.5,267.8 L440.0,269.2 L441.5,267.8 L443.0,269.2 L444.5,267.8 L446.0,269.2 L447.5,267.8 L449.0,269.2 L450.5,267.8 L452.0,269.2" stroke="#e0322a" stroke-width="0.8" fill="none" opacity="0.8"/>
<path d="M400.0,289.5 L401.5,288.8 L403.0,290.2 L404.5,288.8 L406.0,290.2 L407.5,288.8 L409.0,290.2 L410.5,288.8 L412.0,290.2 L413.5,288.8 L415.0,290.2 L416.5,288.8 L418.0,290.2 L419.5,288.8 L421.0,290.2 L422.5,288.8 L424.0,290.2 L425.5,288.8 L427.0,290.2 L428.5,288.8 L430.0,290.2 L431.5,288.8 L433.0,290.2 L434.5,288.8 L436.0,290.2 L437.5,288.8 L439.0,290.2 L440.5,288.8 L442.0,290.2 L443.5,288.8 L445.0,290.2 L446.5,288.8 L448.0,290.2" stroke="#e0322a" stroke-width="0.8" fill="none" opacity="0.8"/>
<path d="M709.0,399.0 L710.5,398.3 L712.0,399.7 L713.5,398.3 L715.0,399.7 L716.5,398.3 L718.0,399.7 L719.5,398.3 L721.0,399.7 L722.5,398.3 L724.0,399.7 L725.5,398.3 L727.0,399.7 L728.5,398.3 L730.0,399.7 L731.5,398.3 L733.0,399.7 L734.5,398.3 L736.0,399.7 L737.5,398.3 L739.0,399.7 L740.5,398.3 L742.0,399.7 L743.5,398.3 L745.0,399.7 L746.5,398.3 L748.0,399.7 L749.5,398.3 L751.0,399.7 L752.5,398.3 L754.0,399.7 L755.5,398.3 L757.0,399.7 L758.5,398.3 L760.0,399.7 L761.5,398.3 L763.0,399.7 L764.5,398.3 L766.0,399.7" stroke="#e0322a" stroke-width="0.8" fill="none" opacity="0.8"/>
<path d="M707.0,418.5 L708.5,417.8 L710.0,419.2 L711.5,417.8 L713.0,419.2 L714.5,417.8 L716.0,419.2 L717.5,417.8 L719.0,419.2 L720.5,417.8 L722.0,419.2 L723.5,417.8 L725.0,419.2 L726.5,417.8 L728.0,419.2 L729.5,417.8 L731.0,419.2 L732.5,417.8 L734.0,419.2 L735.5,417.8 L737.0,419.2 L738.5,417.8 L740.0,419.2 L741.5,417.8 L743.0,419.2 L744.5,417.8 L746.0,419.2 L747.5,417.8 L749.0,419.2 L750.5,417.8 L752.0,419.2 L753.5,417.8 L755.0,419.2 L756.5,417.8 L758.0,419.2 L759.5,417.8 L761.0,419.2 L762.5,417.8 L764.0,419.2 L765.5,417.8 L767.0,419.2 L768.5,417.8 L770.0,419.2" stroke="#e0322a" stroke-width="0.8" fill="none" opacity="0.8"/>
<path d="M716.0,438.5 L717.5,437.8 L719.0,439.2 L720.5,437.8 L722.0,439.2 L723.5,437.8 L725.0,439.2 L726.5,437.8 L728.0,439.2 L729.5,437.8 L731.0,439.2 L732.5,437.8 L734.0,439.2 L735.5,437.8 L737.0,439.2 L738.5,437.8 L740.0,439.2 L741.5,437.8 L743.0,439.2 L744.5,437.8 L746.0,439.2 L747.5,437.8 L749.0,439.2 L750.5,437.8 L752.0,439.2 L753.5,437.8 L755.0,439.2 L756.5,437.8 L758.0,439.2 L759.5,437.8 L761.0,439.2" stroke="#e0322a" stroke-width="0.8" fill="none" opacity="0.8"/>
</svg>
<div class="a" style="left:0px;top:0px;width:1280px;height:43px;background:#b7472a;"></div>
<div class="a" style="left:41px;top:22px;width:46px;height:21px;background:#f3f3f3;"></div>
<svg class="a" style="left:13px;top:5px;" width="13" height="13" viewBox="0 0 13 13"><path d="M1.5,1.5 h8 l2,2 v8 h-10 z" fill="none" stroke="#fff" stroke-width="1.3"/><rect x="3.5" y="1.5" width="5" height="3.5" fill="none" stroke="#fff" stroke-width="1.1"/><rect x="3.5" y="8" width="5" height="3.5" fill="#fff"/></svg>
<svg class="a" style="left:32px;top:5px;" width="14" height="13" viewBox="0 0 14 13"><path d="M3,4 h6 a3.5,3.5 0 0 1 0,7 h-4" fill="none" stroke="#d98e78" stroke-width="1.3"/><path d="M1,4 l3,-2.5 v5 z" fill="#d98e78"/></svg>
<svg class="a" style="left:47px;top:9px;" width="6" height="4" viewBox="0 0 6 4"><path d="M0.5,0.5 L3,3 L5.5,0.5" fill="none" stroke="#d98e78" stroke-width="1"/></svg>
<svg class="a" style="left:59px;top:5px;" width="11" height="13" viewBox="0 0 11 13"><path d="M8.5,3.5 a4.2,4.2 0 1 1 -5.5,0" fill="none" stroke="#d98e78" stroke-width="1.3"/><path d="M8,1 v3.5 h-3" fill="none" stroke="#d98e78" stroke-width="1.2"/></svg>
<svg class="a" style="left:78px;top:5px;" width="13" height="13" viewBox="0 0 13 13"><rect x="1" y="1" width="11" height="1.2" fill="#fff"/><path d="M2,2.5 v6 h9 v-6" fill="none" stroke="#fff" stroke-width="1.1"/><circle cx="8" cy="6" r="3" fill="none" stroke="#fff" stroke-width="1.1"/><path d="M7.2,4.6 l2,1.4 l-2,1.4z" fill="#fff"/><path d="M6.5,9 v3 M4,12 h5" stroke="#fff" stroke-width="1"/></svg>
<svg class="a" style="left:94px;top:5px;" width="13" height="13" viewBox="0 0 13 13"><rect x="1.5" y="1.5" width="10.5" height="10.5" fill="none" stroke="#fff" stroke-width="1.2"/><path d="M1.5,4 h10.5 M6,6.5 h4 M6,8.5 h4 M6,10.5 h3" stroke="#fff" stroke-width="1"/></svg>
<svg class="a" style="left:110px;top:9px;" width="6" height="4" viewBox="0 0 6 4"><path d="M0.5,0.5 L3,3 L5.5,0.5" fill="none" stroke="#fff" stroke-width="1"/></svg>
<svg class="a" style="left:125px;top:8px;" width="6" height="7" viewBox="0 0 6 7"><path d="M0.5,0.5 h5" stroke="#fff" stroke-width="1"/><path d="M0.5,2.5 L3,5.5 L5.5,2.5z" fill="#fff"/></svg>
<div class="t" style="left:566.90px;top:5.78px;font-size:9px;color:#fbeee9;transform:scaleX(0.910);font-family:"Liberation Sans",sans-serif;">қортынды сабақ күншуақ</div>
<div class="a" style="left:665.5px;top:10px;width:3.0px;height:1px;background:#e0a090;"></div>
<div class="t" style="left:672.40px;top:5.78px;font-size:9px;color:#fbeee9;transform:scaleX(0.880);font-family:"Liberation Sans",sans-serif;">PowerPoint</div>
<div class="a" style="left:1119px;top:4px;width:32px;height:13px;background:#ffffff;"></div>
<div class="t" style="left:1126.40px;top:5.70px;font-size:8.5px;color:#8a3b28;transform:scaleX(0.879);font-family:"Liberation Sans",sans-serif;">Вход</div>
<svg class="a" style="left:1167px;top:6px;" width="11" height="9" viewBox="0 0 11 9"><rect x="0.5" y="0.5" width="10" height="7.5" fill="none" stroke="#fff" stroke-width="1"/><path d="M0.5,2.5 h10 M3.5,4 h4 v3 h-4z" stroke="#fff" stroke-width="0.9" fill="none"/></svg>
<div class="a" style="left:1200px;top:10px;width:8px;height:1px;background:#fff;"></div>
<svg class="a" style="left:1229px;top:6px;" width="10" height="9" viewBox="0 0 10 9"><rect x="0.5" y="2.5" width="6.5" height="6" fill="none" stroke="#fff" stroke-width="1"/><path d="M2.5,2.5 v-2 h7 v6 h-2.5" fill="none" stroke="#fff" stroke-width="1"/></svg>
<svg class="a" style="left:1260px;top:6px;" width="10" height="9" viewBox="0 0 10 9"><path d="M1,0.5 L9,8.5 M9,0.5 L1,8.5" stroke="#fff" stroke-width="1.1"/></svg>
<svg class="a" style="left:1207px;top:26px;" width="12" height="13" viewBox="0 0 12 13"><circle cx="5" cy="4" r="3" fill="none" stroke="#fff" stroke-width="1.1"/><path d="M0.8,12 c0,-3.5 2,-5 4.2,-5 c1.5,0 2.5,0.5 3.2,1.5" fill="none" stroke="#fff" stroke-width="1.1"/><path d="M9,8 v4.5 M6.8,10.2 h4.5" stroke="#fff" stroke-width="1.1"/></svg>
<div class="t" style="left:1221.00px;top:27.58px;font-size:9px;color:#fbeee9;transform:scaleX(0.863);font-family:"Liberation Sans",sans-serif;">Поделиться</div>
<div class="t" style="left:9.75px;top:27.61px;font-size:9.2px;color:#fbeee9;transform:scaleX(0.869);font-family:"Liberation Sans",sans-serif;">Файл</div>
<div class="t" style="left:96.25px;top:27.61px;font-size:9.2px;color:#fbeee9;transform:scaleX(0.804);font-family:"Liberation Sans",sans-serif;">Вставка</div>
<div class="t" style="left:142.00px;top:27.61px;font-size:9.2px;color:#fbeee9;transform:scaleX(0.891);font-family:"Liberation Sans",sans-serif;">Конструктор</div>
<div class="t" style="left:206.25px;top:27.61px;font-size:9.2px;color:#fbeee9;transform:scaleX(0.869);font-family:"Liberation Sans",sans-serif;">Переходы</div>
<div class="t" style="left:262.00px;top:27.61px;font-size:9.2px;color:#fbeee9;transform:scaleX(0.880);font-family:"Liberation Sans",sans-serif;">Анимация</div>
<div class="t" style="left:318.00px;top:27.61px;font-size:9.2px;color:#fbeee9;transform:scaleX(0.881);font-family:"Liberation Sans",sans-serif;">Слайд-шоу</div>
<div class="t" style="left:378.00px;top:27.61px;font-size:9.2px;color:#fbeee9;transform:scaleX(0.859);font-family:"Liberation Sans",sans-serif;">Рецензирование</div>
<div class="t" style="left:456.25px;top:27.61px;font-size:9.2px;color:#fbeee9;transform:scaleX(0.844);font-family:"Liberation Sans",sans-serif;">Вид</div>
<div class="t" style="left:488.00px;top:27.61px;font-size:9.2px;color:#fbeee9;transform:scaleX(0.852);font-family:"Liberation Sans",sans-serif;">Справка</div>
<div class="t" style="left:48.75px;top:27.61px;font-size:9.2px;color:#5b4a44;transform:scaleX(0.838);font-family:"Liberation Sans",sans-serif;">Главная</div>
<svg class="a" style="left:536px;top:25px;" width="12" height="14" viewBox="0 0 12 14"><path d="M6,1.2 a3.9,3.9 0 0 0 -2.3,7 v1.8 h4.6 v-1.8 a3.9,3.9 0 0 0 -2.3,-7z" fill="none" stroke="#fff" stroke-width="1"/><path d="M4.2,11.5 h3.6 M4.6,12.8 h2.8" stroke="#fff" stroke-width="0.9"/></svg>
<div class="t" style="left:555.60px;top:27.41px;font-size:9.2px;color:#fbeee9;transform:scaleX(0.830);font-family:"Liberation Sans",sans-serif;">Что вы хотите сделать?</div>
<div class="a" style="left:0px;top:43px;width:1280px;height:61px;background:#f3f3f3;"></div>
<div class="a" style="left:0px;top:104px;width:1280px;height:1px;background:#d8d8d8;"></div>
<svg class="a" style="left:1266px;top:96px;" width="10" height="7" viewBox="0 0 10 7"><path d="M1,5.5 L5,1.5 L9,5.5" fill="none" stroke="#777" stroke-width="1"/></svg>
<div class="a" style="left:136px;top:47px;width:1px;height:54px;background:#dcdcdc;"></div>
<div class="a" style="left:248.5px;top:47px;width:1.0px;height:54px;background:#dcdcdc;"></div>
<div class="a" style="left:445.5px;top:47px;width:1.0px;height:54px;background:#dcdcdc;"></div>
<div class="a" style="left:694.5px;top:47px;width:1.0px;height:54px;background:#dcdcdc;"></div>
<svg class="a" style="left:14px;top:47px;" width="21" height="22" viewBox="0 0 21 22"><rect x="1" y="3" width="16" height="17" fill="#e8c27a"/><rect x="5" y="1" width="8" height="4" fill="#7a7a7a"/><rect x="6.5" y="0" width="5" height="2" fill="#7a7a7a"/><path d="M10,8.5 h6.5 l3.5,3.5 v9.5 h-10 z" fill="#fff" stroke="#6d6d6d" stroke-width="0.9"/></svg>
<div class="t" style="left:6.80px;top:70.25px;font-size:8.8px;color:#3b3b3b;transform:scaleX(0.845);font-family:"Liberation Sans",sans-serif;">Вставить</div>
<svg class="a" style="left:20px;top:83px;" width="5" height="4" viewBox="0 0 5 4"><path d="M0.5,0.5 L2.5,2.5 L4.5,0.5" fill="none" stroke="#777" stroke-width="0.9"/></svg>
<svg class="a" style="left:42px;top:46px;" width="12" height="11" viewBox="0 0 12 11"><circle cx="3" cy="8" r="2.2" fill="none" stroke="#5b86c5" stroke-width="1.1"/><circle cx="9" cy="8" r="2.2" fill="none" stroke="#5b86c5" stroke-width="1.1"/><path d="M4,6 L9,0.5 M8,6 L3,0.5" stroke="#555" stroke-width="1"/></svg>
<div class="t" style="left:55.80px;top:47.52px;font-size:8.6px;color:#3b3b3b;transform:scaleX(0.873);font-family:"Liberation Sans",sans-serif;">Вырезать</div>
<svg class="a" style="left:42px;top:62px;" width="12" height="11" viewBox="0 0 12 11"><rect x="0.5" y="0.5" width="6.5" height="7.5" fill="#fff" stroke="#666" stroke-width="0.9"/><rect x="4.5" y="3.5" width="6.5" height="7" fill="#fff" stroke="#666" stroke-width="0.9"/><rect x="6" y="6" width="2" height="2" fill="#5b86c5"/></svg>
<div class="t" style="left:55.80px;top:63.32px;font-size:8.6px;color:#3b3b3b;transform:scaleX(0.922);font-family:"Liberation Sans",sans-serif;">Копировать</div>
<svg class="a" style="left:105px;top:67px;" width="5" height="4" viewBox="0 0 5 4"><path d="M0.5,0.5 L2.5,2.5 L4.5,0.5" fill="none" stroke="#777" stroke-width="0.9"/></svg>
<svg class="a" style="left:42px;top:77px;" width="12" height="11" viewBox="0 0 12 11"><path d="M1,9 L6,4 L8,6 L3,11z" fill="#e6c27c"/><path d="M6.5,3.5 L9.5,0.5 L11.5,2.5 L8.5,5.5z" fill="#555"/></svg>
<div class="t" style="left:55.80px;top:78.12px;font-size:8.6px;color:#3b3b3b;transform:scaleX(0.930);font-family:"Liberation Sans",sans-serif;">Формат по образцу</div>
<div class="t" style="left:37.70px;top:94.19px;font-size:8.4px;color:#444;transform:scaleX(0.881);font-family:"Liberation Sans",sans-serif;">Буфер обмена</div>
<svg class="a" style="left:128px;top:95px;" width="7" height="7" viewBox="0 0 7 7"><path d="M0.5,6.5 v-6 h6 v6z M2,2 L6,6 M4,6 h2.5 v-2.5" fill="none" stroke="#888" stroke-width="0.8"/></svg>
<svg class="a" style="left:147px;top:46px;" width="23" height="20" viewBox="0 0 23 20"><rect x="2.5" y="4.5" width="19" height="14" fill="#fff" stroke="#777" stroke-width="1"/><rect x="5" y="8" width="14" height="3" fill="#ccc"/><rect x="5" y="12.5" width="14" height="3" fill="#ddd"/><circle cx="4" cy="4" r="3.5" fill="#f5d37a"/></svg>
<div class="t" style="left:144.40px;top:70.85px;font-size:8.8px;color:#3b3b3b;transform:scaleX(0.840);font-family:"Liberation Sans",sans-serif;">Создать</div>
<div class="t" style="left:144.40px;top:80.25px;font-size:8.8px;color:#3b3b3b;transform:scaleX(0.850);font-family:"Liberation Sans",sans-serif;">слайд</div>
<svg class="a" style="left:168px;top:84px;" width="5" height="4" viewBox="0 0 5 4"><path d="M0.5,0.5 L2.5,2.5 L4.5,0.5" fill="none" stroke="#777" stroke-width="0.9"/></svg>
<svg class="a" style="left:176px;top:46px;" width="12" height="11" viewBox="0 0 12 11"><rect x="0.5" y="0.5" width="10.5" height="9.5" fill="#fff" stroke="#777" stroke-width="0.9"/><rect x="2" y="2.5" width="3" height="6" fill="#bbb"/></svg>
<div class="t" style="left:189.70px;top:47.85px;font-size:8.8px;color:#3b3b3b;transform:scaleX(0.895);font-family:"Liberation Sans",sans-serif;">Макет</div>
<svg class="a" style="left:215px;top:52px;" width="5" height="4" viewBox="0 0 5 4"><path d="M0.5,0.5 L2.5,2.5 L4.5,0.5" fill="none" stroke="#777" stroke-width="0.9"/></svg>
<svg class="a" style="left:176px;top:62px;" width="12" height="11" viewBox="0 0 12 11"><rect x="0.5" y="2.5" width="10.5" height="8" fill="#fff" stroke="#777" stroke-width="0.9"/><path d="M1,3 a4,4 0 0 1 6,-2" fill="none" stroke="#3a78c9" stroke-width="1.1"/><path d="M3,6 h6 M3,8 h5" stroke="#999" stroke-width="0.8"/></svg>
<div class="t" style="left:189.70px;top:63.05px;font-size:8.8px;color:#3b3b3b;transform:scaleX(0.875);font-family:"Liberation Sans",sans-serif;">Восстановить</div>
<svg class="a" style="left:176px;top:77px;" width="12" height="11" viewBox="0 0 12 11"><rect x="2.5" y="4.5" width="9" height="6" fill="#fff" stroke="#777" stroke-width="0.9"/><path d="M0.5,2 h6 M0.5,4 h3" stroke="#e8a04a" stroke-width="1.2"/></svg>
<div class="t" style="left:189.70px;top:78.55px;font-size:8.8px;color:#3b3b3b;transform:scaleX(0.836);font-family:"Liberation Sans",sans-serif;">Раздел</div>
<svg class="a" style="left:217px;top:83px;" width="5" height="4" viewBox="0 0 5 4"><path d="M0.5,0.5 L2.5,2.5 L4.5,0.5" fill="none" stroke="#777" stroke-width="0.9"/></svg>
<div class="t" style="left:179.70px;top:93.89px;font-size:8.4px;color:#444;transform:scaleX(0.835);font-family:"Liberation Sans",sans-serif;">Слайды</div>
<div class="a" style="left:255px;top:50px;width:100px;height:14px;background:#e4e4e4;border:1px solid #dadada"></div>
<div class="a" style="left:357px;top:50px;width:30px;height:14px;background:#e4e4e4;border:1px solid #dadada"></div>
<svg class="a" style="left:349px;top:56px;" width="5" height="4" viewBox="0 0 5 4"><path d="M0.5,0.5 L2.5,2.5 L4.5,0.5" fill="none" stroke="#bbb" stroke-width="0.9"/></svg>
<svg class="a" style="left:381px;top:56px;" width="5" height="4" viewBox="0 0 5 4"><path d="M0.5,0.5 L2.5,2.5 L4.5,0.5" fill="none" stroke="#bbb" stroke-width="0.9"/></svg>
<div class="t" style="left:393.00px;top:53.53px;font-size:10px;color:#b5b5b5;transform:scaleX(1.199);font-family:"Liberation Sans",sans-serif;">A</div>
<div class="t" style="left:400.00px;top:50.92px;font-size:6px;color:#b5b5b5;transform:scaleX(1.141);font-family:"Liberation Sans",sans-serif;">˄</div>
<div class="t" style="left:410.00px;top:54.80px;font-size:8.5px;color:#b5b5b5;transform:scaleX(1.146);font-family:"Liberation Sans",sans-serif;">A</div>
<div class="t" style="left:415.00px;top:50.92px;font-size:6px;color:#b5b5b5;transform:scaleX(1.141);font-family:"Liberation Sans",sans-serif;">˅</div>
<svg class="a" style="left:428px;top:52px;" width="12" height="11" viewBox="0 0 12 11"><path d="M1,10 L5,1 L9,10 M3,6.5 h4" fill="none" stroke="#b5b5b5" stroke-width="1"/><path d="M6,9 l4,-4 l2,2 l-4,4z" fill="#c9a7a0"/></svg>
<div class="t" style="left:258.00px;top:73.53px;font-size:10px;font-weight:700;color:#b5b5b5;transform:scaleX(0.885);font-family:"Liberation Sans",sans-serif;">Ж</div>
<div class="t" style="left:274.60px;top:73.53px;font-size:10px;color:#b5b5b5;transform:scaleX(0.893);font-family:"Liberation Sans",sans-serif;font-style:italic;">К</div>
<div class="t" style="left:290.00px;top:73.53px;font-size:10px;color:#b5b5b5;transform:scaleX(1.095);font-family:"Liberation Sans",sans-serif;text-decoration:underline;">Ч</div>
<div class="t" style="left:306.70px;top:73.53px;font-size:10px;color:#b5b5b5;transform:scaleX(0.989);font-family:"Liberation Sans",sans-serif;">S</div>
<div class="t" style="left:320.50px;top:73.53px;font-size:10px;color:#b5b5b5;transform:scaleX(0.682);font-family:"Liberation Sans",sans-serif;">abc</div>
<div class="a" style="left:306px;top:77px;width:8px;height:1px;background:#b0b0b0;"></div>
<div class="t" style="left:336.30px;top:72.80px;font-size:8.5px;color:#b5b5b5;transform:scaleX(1.018);font-family:"Liberation Sans",sans-serif;">AV</div>
<div class="a" style="left:338px;top:82px;width:8px;height:1px;background:#c0c0c0;"></div>
<div class="t" style="left:361.40px;top:73.53px;font-size:10px;color:#b5b5b5;transform:scaleX(0.899);font-family:"Liberation Sans",sans-serif;">Aa</div>
<svg class="a" style="left:351px;top:77px;" width="5" height="4" viewBox="0 0 5 4"><path d="M0.5,0.5 L2.5,2.5 L4.5,0.5" fill="none" stroke="#c0c0c0" stroke-width="0.9"/></svg>
<svg class="a" style="left:376px;top:77px;" width="5" height="4" viewBox="0 0 5 4"><path d="M0.5,0.5 L2.5,2.5 L4.5,0.5" fill="none" stroke="#c0c0c0" stroke-width="0.9"/></svg>
<svg class="a" style="left:408px;top:77px;" width="5" height="4" viewBox="0 0 5 4"><path d="M0.5,0.5 L2.5,2.5 L4.5,0.5" fill="none" stroke="#c0c0c0" stroke-width="0.9"/></svg>
<svg class="a" style="left:434px;top:77px;" width="5" height="4" viewBox="0 0 5 4"><path d="M0.5,0.5 L2.5,2.5 L4.5,0.5" fill="none" stroke="#c0c0c0" stroke-width="0.9"/></svg>
<svg class="a" style="left:468px;top:56px;" width="5" height="4" viewBox="0 0 5 4"><path d="M0.5,0.5 L2.5,2.5 L4.5,0.5" fill="none" stroke="#c0c0c0" stroke-width="0.9"/></svg>
<svg class="a" style="left:495px;top:56px;" width="5" height="4" viewBox="0 0 5 4"><path d="M0.5,0.5 L2.5,2.5 L4.5,0.5" fill="none" stroke="#c0c0c0" stroke-width="0.9"/></svg>
<svg class="a" style="left:536px;top:77px;" width="5" height="4" viewBox="0 0 5 4"><path d="M0.5,0.5 L2.5,2.5 L4.5,0.5" fill="none" stroke="#c0c0c0" stroke-width="0.9"/></svg>
<div class="a" style="left:386px;top:72px;width:1px;height:14px;background:#dddddd;"></div>
<svg class="a" style="left:392px;top:71px;" width="12" height="12" viewBox="0 0 12 12"><path d="M1,1 l2,6 l2,-6 M6,7 v-6 h2 a1.5,1.5 0 0 1 0,3 h-2 h2.5 a1.5,1.5 0 0 1 0,3z" fill="none" stroke="#b5b5b5" stroke-width="0.9"/><path d="M2,10 L11,3" stroke="#b5b5b5" stroke-width="1.3"/><rect x="0" y="10.5" width="12" height="1.5" fill="#d8d8d8"/></svg>
<div class="t" style="left:420.50px;top:73.53px;font-size:10px;color:#b5b5b5;transform:scaleX(0.974);font-family:"Liberation Sans",sans-serif;">A</div>
<div class="t" style="left:332.00px;top:94.19px;font-size:8.4px;color:#444;transform:scaleX(0.829);font-family:"Liberation Sans",sans-serif;">Шрифт</div>
<svg class="a" style="left:437px;top:95px;" width="7" height="7" viewBox="0 0 7 7"><path d="M0.5,6.5 v-6 h6 v6z M2,2 L6,6 M4,6 h2.5 v-2.5" fill="none" stroke="#aaa" stroke-width="0.8"/></svg>
<svg class="a" style="left:453px;top:52px;" width="11" height="11" viewBox="0 0 11 11"><rect x="0" y="0" width="2" height="2" fill="#bbb"/><rect x="4" y="0.5" width="7" height="1" fill="#c6c6c6"/><rect x="0" y="4" width="2" height="2" fill="#bbb"/><rect x="4" y="4.5" width="7" height="1" fill="#c6c6c6"/><rect x="0" y="8" width="2" height="2" fill="#bbb"/><rect x="4" y="8.5" width="7" height="1" fill="#c6c6c6"/></svg>
<svg class="a" style="left:480px;top:52px;" width="11" height="11" viewBox="0 0 11 11"><rect x="0" y="0" width="2" height="3" fill="#bbb"/><rect x="4" y="0.5" width="7" height="1" fill="#c6c6c6"/><rect x="0" y="4" width="2" height="3" fill="#bbb"/><rect x="4" y="4.5" width="7" height="1" fill="#c6c6c6"/><rect x="0" y="8" width="2" height="3" fill="#bbb"/><rect x="4" y="8.5" width="7" height="1" fill="#c6c6c6"/></svg>
<svg class="a" style="left:453px;top:73px;" width="11" height="9" viewBox="0 0 11 9"><rect x="0" y="0.0" width="11" height="1.3" fill="#c4c4c4"/><rect x="0" y="2.5" width="7" height="1.3" fill="#c4c4c4"/><rect x="0" y="5.0" width="11" height="1.3" fill="#c4c4c4"/><rect x="0" y="7.5" width="7" height="1.3" fill="#c4c4c4"/></svg>
<svg class="a" style="left:469px;top:73px;" width="11" height="9" viewBox="0 0 11 9"><rect x="0.0" y="0.0" width="11" height="1.3" fill="#c4c4c4"/><rect x="2.0" y="2.5" width="7" height="1.3" fill="#c4c4c4"/><rect x="0.0" y="5.0" width="11" height="1.3" fill="#c4c4c4"/><rect x="2.0" y="7.5" width="7" height="1.3" fill="#c4c4c4"/></svg>
<svg class="a" style="left:485px;top:73px;" width="11" height="9" viewBox="0 0 11 9"><rect x="0" y="0.0" width="11" height="1.3" fill="#c4c4c4"/><rect x="4" y="2.5" width="7" height="1.3" fill="#c4c4c4"/><rect x="0" y="5.0" width="11" height="1.3" fill="#c4c4c4"/><rect x="4" y="7.5" width="7" height="1.3" fill="#c4c4c4"/></svg>
<svg class="a" style="left:501px;top:73px;" width="10" height="9" viewBox="0 0 10 9"><rect x="0" y="0.0" width="10" height="1.3" fill="#c4c4c4"/><rect x="0" y="2.5" width="10" height="1.3" fill="#c4c4c4"/><rect x="0" y="5.0" width="10" height="1.3" fill="#c4c4c4"/><rect x="0" y="7.5" width="10" height="1.3" fill="#c4c4c4"/></svg>
<div class="a" style="left:517px;top:72px;width:1px;height:14px;background:#dddddd;"></div>
<svg class="a" style="left:522px;top:73px;" width="9" height="9" viewBox="0 0 9 9"><rect x="0" y="0" width="4" height="9" fill="#c8c8c8"/><rect x="5" y="0" width="4" height="9" fill="#c8c8c8"/></svg>
<svg class="a" style="left:569px;top:60px;" width="13" height="14" viewBox="0 0 13 14"><rect x="0.5" y="0.5" width="12" height="13" fill="none" stroke="#c0c0c0" stroke-width="0.9"/><path d="M3,4 h7 M3,7 h7 M3,10 h7 M6.5,1 v12" stroke="#c8c8c8" stroke-width="0.8"/></svg>
<div class="t" style="left:583.75px;top:63.02px;font-size:8.6px;color:#b5b5b5;transform:scaleX(0.905);font-family:"Liberation Sans",sans-serif;">Выровнять текст</div>
<svg class="a" style="left:646px;top:67px;" width="5" height="4" viewBox="0 0 5 4"><path d="M0.5,0.5 L2.5,2.5 L4.5,0.5" fill="none" stroke="#c0c0c0" stroke-width="0.9"/></svg>
<svg class="a" style="left:569px;top:76px;" width="13" height="13" viewBox="0 0 13 13"><rect x="0.5" y="0.5" width="7" height="5" fill="#d0d0d0"/><rect x="4.5" y="5.5" width="8" height="7" fill="none" stroke="#c0c0c0" stroke-width="0.9"/><path d="M6,8 h5 M6,10 h5" stroke="#c8c8c8" stroke-width="0.8"/></svg>
<div class="t" style="left:583.75px;top:78.72px;font-size:8.6px;color:#b5b5b5;transform:scaleX(0.904);font-family:"Liberation Sans",sans-serif;">Преобразовать в SmartArt</div>
<svg class="a" style="left:681px;top:83px;" width="5" height="4" viewBox="0 0 5 4"><path d="M0.5,0.5 L2.5,2.5 L4.5,0.5" fill="none" stroke="#c0c0c0" stroke-width="0.9"/></svg>
<div class="t" style="left:554.70px;top:94.49px;font-size:8.4px;color:#444;transform:scaleX(0.929);font-family:"Liberation Sans",sans-serif;">Абзац</div>
<svg class="a" style="left:688px;top:95px;" width="7" height="7" viewBox="0 0 7 7"><path d="M0.5,6.5 v-6 h6 v6z M2,2 L6,6 M4,6 h2.5 v-2.5" fill="none" stroke="#aaa" stroke-width="0.8"/></svg>
<div class="a" style="left:703px;top:46px;width:91px;height:42px;background:#ffffff;border:1px solid #d4d4d4"></div>
<div class="a" style="left:783px;top:46px;width:11px;height:42px;background:#f7f7f7;border:1px solid #d4d4d4"></div>
<div class="a" style="left:783px;top:72px;width:11px;height:1px;background:#d4d4d4;"></div>
<svg class="a" style="left:786px;top:65px;" width="5" height="3" viewBox="0 0 5 3"><path d="M0.5,0.5 L2.5,2.5 L4.5,0.5" fill="none" stroke="#666" stroke-width="0.9"/></svg>
<svg class="a" style="left:786px;top:77px;" width="5" height="6" viewBox="0 0 5 6"><path d="M0,0.5 h5" stroke="#666" stroke-width="0.8"/><path d="M0.5,2.5 L2.5,4.5 L4.5,2.5" fill="none" stroke="#666" stroke-width="0.9"/></svg>
<svg class="a" style="left:704px;top:62px;" width="78" height="24" viewBox="0 0 78 24"><path d="M1,9.5 L5.5,1 L10,9.5z" fill="none" stroke="#444" stroke-width="0.9"/><path d="M14,1.5 h4 v8 h5" fill="none" stroke="#444" stroke-width="0.9"/><path d="M27,1.5 h4 v8 h5 M34,7.5 l2,2 l-2,2" fill="none" stroke="#444" stroke-width="0.9"/><path d="M40,3.5 h5 v-2.5 l4.5,4.5 l-4.5,4.5 v-2.5 h-5z" fill="none" stroke="#444" stroke-width="0.9"/><path d="M55.5,1 h3 v4.5 h2.5 l-4,4.5 l-4,-4.5 h2.5z" fill="none" stroke="#444" stroke-width="0.9"/><path d="M67,9.5 v-5 a3.5,3.5 0 0 1 7,0 a2.5,2.5 0 0 1 2,2.5 v2.5z" fill="none" stroke="#444" stroke-width="0.9"/><path d="M3,13 c-3,2 3,4 0,6 l2,2 M4,18 l1,3 l-2,0" fill="none" stroke="#444" stroke-width="0.9"/><path d="M14,13.5 c3,0 6,2 7,8" fill="none" stroke="#444" stroke-width="0.9"/><path d="M25,21 c1,-9 4,-9 5,-4 c1,4 3,4 5,4" fill="none" stroke="#444" stroke-width="0.9"/><path d="M47,13 c-2,0 -1,4 -2.5,4 c1.5,0 0.5,4 2.5,4" fill="none" stroke="#444" stroke-width="0.9"/><path d="M56,13 c2,0 1,4 2.5,4 c-1.5,0 -0.5,4 -2.5,4" fill="none" stroke="#444" stroke-width="0.9"/><path d="M72,12.5 l2,4 l4,0.5 l-3,2.8 l0.8,4 l-3.8,-2 l-3.8,2 l0.8,-4 l-3,-2.8 l4,-0.5z" fill="none" stroke="#444" stroke-width="0.9"/></svg>
<svg class="a" style="left:813px;top:58px;" width="18" height="9" viewBox="0 0 18 9"><rect x="2" y="1" width="8" height="7" fill="#f4b66a"/><rect x="7" y="3" width="8" height="5.5" fill="#fff" stroke="#666" stroke-width="0.8"/></svg>
<div class="t" style="left:796.80px;top:70.15px;font-size:8.8px;color:#3b3b3b;transform:scaleX(0.907);font-family:"Liberation Sans",sans-serif;">Упорядочить</div>
<svg class="a" style="left:818px;top:84px;" width="5" height="4" viewBox="0 0 5 4"><path d="M0.5,0.5 L2.5,2.5 L4.5,0.5" fill="none" stroke="#777" stroke-width="0.9"/></svg>
<svg class="a" style="left:861px;top:46px;" width="18" height="22" viewBox="0 0 18 22"><path d="M2,20 c0,-5 4,-8 8,-12 l6,-6 c1,3 0,6 -3,9 c-3,3 -6,8 -11,9z" fill="#f0f0f0" stroke="#c8c8c8" stroke-width="1"/><path d="M6,15 c3,-2 5,-4 8,-8" stroke="#d0d0d0" stroke-width="1"/></svg>
<div class="t" style="left:848.00px;top:70.15px;font-size:8.8px;color:#b5b5b5;transform:scaleX(0.896);font-family:"Liberation Sans",sans-serif;">Экспресс-</div>
<div class="t" style="left:859.00px;top:81.15px;font-size:8.8px;color:#b5b5b5;transform:scaleX(0.633);font-family:"Liberation Sans",sans-serif;">стили</div>
<svg class="a" style="left:876px;top:85px;" width="5" height="4" viewBox="0 0 5 4"><path d="M0.5,0.5 L2.5,2.5 L4.5,0.5" fill="none" stroke="#c0c0c0" stroke-width="0.9"/></svg>
<svg class="a" style="left:889px;top:47px;" width="11" height="10" viewBox="0 0 11 10"><path d="M2,5 l4,-4 l4,4 l-4,4z" fill="none" stroke="#c0c0c0" stroke-width="0.9"/><path d="M1,1 c2,-1 3,1 3,2" fill="none" stroke="#c0c0c0" stroke-width="0.8"/></svg>
<div class="t" style="left:901.00px;top:47.85px;font-size:8.8px;color:#b5b5b5;transform:scaleX(0.908);font-family:"Liberation Sans",sans-serif;">Заливка фигуры</div>
<svg class="a" style="left:889px;top:62px;" width="11" height="10" viewBox="0 0 11 10"><rect x="0.5" y="1.5" width="8" height="8" fill="none" stroke="#c0c0c0" stroke-width="0.9"/><path d="M4,6 l6,-6" stroke="#a0a0a0" stroke-width="1.1"/></svg>
<div class="t" style="left:901.00px;top:62.75px;font-size:8.8px;color:#b5b5b5;transform:scaleX(0.991);font-family:"Liberation Sans",sans-serif;">Контур фигуры</div>
<svg class="a" style="left:889px;top:77px;" width="11" height="10" viewBox="0 0 11 10"><ellipse cx="5" cy="5" rx="4.5" ry="3.5" fill="#e0e0e0" stroke="#c0c0c0" stroke-width="0.9"/></svg>
<div class="t" style="left:901.00px;top:78.05px;font-size:8.8px;color:#b5b5b5;transform:scaleX(0.910);font-family:"Liberation Sans",sans-serif;">Эффекты фигур</div>
<div class="t" style="left:815.80px;top:94.19px;font-size:8.4px;color:#444;transform:scaleX(0.879);font-family:"Liberation Sans",sans-serif;">Рисование</div>
<div class="a" style="left:508px;top:46px;width:233px;height:15px;background:#3cb81d;border-radius:3px 0 0 3px;box-shadow:0 1px 2px rgba(0,0,0,.25)"></div>
<div class="a" style="left:740px;top:46px;width:121px;height:15px;background:#e02b2b;border-radius:0 3px 3px 0;box-shadow:0 1px 2px rgba(0,0,0,.25)"></div>
<svg class="a" style="left:512px;top:49px;" width="9" height="9" viewBox="0 0 9 9"><path d="M1.5,2 c0,3 2,6 6,6.5 l0.8,-1.8 l-2,-1 l-0.8,0.8 c-1,-0.5 -2,-1.5 -2.5,-2.5 l0.8,-0.8 l-1,-2 z" fill="#1d4a12"/></svg>
<div class="t" style="left:542.70px;top:48.30px;font-size:8.8px;font-weight:700;color:#12240c;transform:scaleX(0.884);font-family:"Liberation Sans",sans-serif;">Вы запустили демонстрацию экрана</div>
<svg class="a" style="left:710px;top:49px;" width="9" height="9" viewBox="0 0 9 9"><circle cx="4.5" cy="4.5" r="3.6" fill="none" stroke="#2a6b18" stroke-width="1.1"/><circle cx="4.5" cy="4.5" r="1.5" fill="#6aa850"/></svg>
<svg class="a" style="left:725px;top:49px;" width="9" height="10" viewBox="0 0 9 10"><path d="M4.5,0.5 l4,1.5 v3 c0,2.5 -2,4 -4,4.5 c-2,-0.5 -4,-2 -4,-4.5 v-3z" fill="#1d3d12"/><path d="M2.5,4.5 l1.5,1.5 l2.5,-2.5" fill="none" stroke="#3cb81d" stroke-width="0.9"/></svg>
<div class="a" style="left:745px;top:50px;width:5px;height:5px;background:#ffffff;"></div>
<div class="t" style="left:755.20px;top:48.05px;font-size:8.8px;font-weight:700;color:#ffffff;transform:scaleX(0.822);font-family:"Liberation Sans",sans-serif;">Остановить демонстрацию</div>
<div class="a" style="left:233px;top:87px;width:98px;height:29px;background:#ffffff;border:1.5px solid #c4543a;box-shadow:1px 1px 2px rgba(0,0,0,.2)"></div>
<div class="t" style="left:236.60px;top:88.95px;font-size:8.8px;color:#333;transform:scaleX(0.908);font-family:"Liberation Sans",sans-serif;">Слайд-шоу</div>
<svg class="a" style="left:308px;top:91px;" width="10" height="5" viewBox="0 0 10 5"><path d="M0.5,0.5 h9 l-4.5,4z" fill="#222"/></svg>
<svg class="a" style="left:321px;top:91px;" width="7" height="7" viewBox="0 0 7 7"><path d="M0.5,0.5 L6.5,6.5 M6.5,0.5 L0.5,6.5" stroke="#222" stroke-width="1.1"/></svg>
<div class="t" style="left:238.00px;top:103.55px;font-size:8.8px;color:#333;transform:scaleX(0.918);font-family:"Liberation Sans",sans-serif;">Продолжить слайд-шоу</div>
<div class="a" style="left:957px;top:43px;width:308px;height:268px;background:#202020;box-shadow:0 1px 3px rgba(0,0,0,.4)"></div>
<div class="a" style="left:1108px;top:43px;width:3px;height:268px;background:#1a1a1a;"></div>
<div class="a" style="left:1003px;top:49px;width:63px;height:84px;overflow:hidden"><div class="a" style="left:0px;top:0px;width:63px;height:84px;background:linear-gradient(90deg,#d8cfc0 0,#e4ddd0 20%,#c9d6e2 30%,#d4dde6 70%,#c8d4dc 100%);"></div><div class="a" style="left:48px;top:38px;width:15px;height:20px;background:#d8c8a0;;opacity:.7"></div><div class="a" style="left:-4px;top:50px;width:71px;height:40px;background:#e6e3df;border-radius:40% 40% 0 0"></div><div class="a" style="left:0px;top:55px;width:14px;height:30px;background:#8a8a88;opacity:.6;border-radius:30% 0 0 0"></div><div class="a" style="left:50px;top:55px;width:13px;height:30px;background:#b0b0b0;opacity:.5"></div><div class="a" style="left:14px;top:10px;width:32px;height:26px;background:#2a2220;border-radius:50% 50% 40% 40%"></div><div class="a" style="left:17px;top:19px;width:26px;height:27px;background:#c9a48c;border-radius:45% 45% 40% 40%"></div><div class="a" style="left:16px;top:41px;width:28px;height:15px;background:#9ec2e0;border-radius:20% 20% 45% 45%"></div><div class="a" style="left:21px;top:54px;width:18px;height:8px;background:#e8e4e0;"></div></div>
<div class="a" style="left:1130px;top:49px;width:112px;height:84px;overflow:hidden"><div class="a" style="left:0px;top:0px;width:112px;height:84px;background:linear-gradient(180deg,#bad2e4 0,#b4cee0 60%,#bccedc 100%);"></div><div class="a" style="left:78px;top:44px;width:34px;height:5px;background:#d6e0e8;"></div><div class="a" style="left:88px;top:0px;width:24px;height:18px;background:#3f9a4a;border-radius:0 0 0 6px"></div><div class="a" style="left:91px;top:0px;width:21px;height:15px;background:#c6c8cc;"></div><div class="a" style="left:91px;top:0px;width:5px;height:15px;background:#c83a3a;"></div><div class="a" style="left:33px;top:-4px;width:40px;height:34px;background:#241e1e;border-radius:45% 45% 30% 30%"></div><div class="a" style="left:37px;top:4px;width:34px;height:38px;background:#ead5c8;border-radius:35% 35% 45% 45%"></div><div class="a" style="left:36px;top:-2px;width:36px;height:12px;background:#241e1e;border-radius:50% 50% 20% 20%"></div><div class="a" style="left:40px;top:30px;width:31px;height:14px;background:#f2f2f6;border-radius:10% 10% 50% 50%"></div><svg class="a" style="left:0;top:0" width="112" height="84"><path d="M0,84 L6,56 C12,48 30,42 42,40 L66,40 C74,44 78,50 80,58 L80,84z" fill="#f3f1ef"/><path d="M48,41 L55,56 L62,41" fill="none" stroke="#e2d8d0" stroke-width="1.2"/></svg><div class="a" style="left:80px;top:54px;width:22px;height:18px;background:#d9b452;border-radius:50%"></div><div class="a" style="left:86px;top:56px;width:26px;height:28px;background:#2a2424;border-radius:50% 30% 0 0"></div></div>
<div class="a" style="left:1003px;top:135px;width:63px;height:84px;overflow:hidden"><div class="a" style="left:0px;top:0px;width:63px;height:84px;background:linear-gradient(180deg,#cfd0d0 0,#dcdcdc 40%,#d6d6d6 100%);"></div><svg class="a" style="left:0;top:0" width="63" height="84"><path d="M35,0 L63,0 L63,68z" fill="#62b0b4"/><path d="M33,0 L63,70" stroke="#eef0f0" stroke-width="2"/><path d="M52,2 l6,10 l-3,2 z" fill="#d84a2a"/><path d="M58,4 l4,6 l-2,1z" fill="#4aa04a"/></svg><div class="a" style="left:0px;top:24px;width:18px;height:26px;background:#a8a8a8;transform:skewY(-12deg)"></div><div class="a" style="left:15px;top:66px;width:3px;height:2px;background:#444;"></div></div>
<div class="a" style="left:1154px;top:134px;width:63px;height:85px;overflow:hidden"><div class="a" style="left:0px;top:0px;width:63px;height:85px;background:linear-gradient(90deg,#d0d0d0 0,#dedede 30%,#e2e2e2 60%,#d4d4d4 100%);"></div><div class="a" style="left:30px;top:0px;width:1.5px;height:85px;background:#c8c8c8;"></div><div class="a" style="left:2px;top:14px;width:10px;height:22px;background:#b4b4b4;"></div><div class="a" style="left:52px;top:48px;width:11px;height:37px;background:#cfcfcf;"></div></div>
<div class="a" style="left:1003px;top:221px;width:63px;height:84px;overflow:hidden"><div class="a" style="left:0px;top:0px;width:63px;height:84px;background:linear-gradient(180deg,#d4d2ce 0,#dedcd8 50%,#d8d6d2 100%);"></div><svg class="a" style="left:0;top:0" width="63" height="84"><path d="M8,0 L63,26" stroke="#f0efec" stroke-width="2"/></svg><div class="a" style="left:16px;top:52px;width:30px;height:40px;background:#2e2626;border-radius:50% 50% 30% 30%"></div><div class="a" style="left:20px;top:64px;width:22px;height:20px;background:#b89080;border-radius:40% 40% 0 0"></div></div>
<div class="a" style="left:960px;top:121px;width:91px;height:11.599999999999994px;background:rgba(40,40,40,.78);"></div>
<svg class="a" style="left:962px;top:122px" width="10" height="11" viewBox="0 0 10 11"><rect x="3" y="0.5" width="4" height="6.5" rx="2" fill="#e0504a"/><path d="M1.5,5 a3.5,3.5 0 0 0 7,0 M5,8.5 v2 M2.5,10.5 h5" fill="none" stroke="#e0504a" stroke-width="1"/><path d="M1,10 L9,1" stroke="#e0504a" stroke-width="1.2"/></svg>
<div class="t" style="left:975.00px;top:122.92px;font-size:8.6px;color:#e8e8e8;transform:scaleX(0.994);font-family:"Liberation Sans",sans-serif;">Кунзада Назарова</div>
<div class="a" style="left:1112.7px;top:120px;width:98.29999999999995px;height:13px;background:rgba(40,40,40,.78);"></div>
<div class="t" style="left:1114.60px;top:122.92px;font-size:8.6px;color:#e8e8e8;transform:scaleX(0.949);font-family:"Liberation Sans",sans-serif;">ҚОББ ЖББ "Ертөстік" б...</div>
<div class="a" style="left:960.4px;top:206.4px;width:93.60000000000002px;height:12.5px;background:rgba(40,40,40,.78);"></div>
<svg class="a" style="left:962.4px;top:207.4px" width="10" height="11" viewBox="0 0 10 11"><rect x="3" y="0.5" width="4" height="6.5" rx="2" fill="#e0504a"/><path d="M1.5,5 a3.5,3.5 0 0 0 7,0 M5,8.5 v2 M2.5,10.5 h5" fill="none" stroke="#e0504a" stroke-width="1"/><path d="M1,10 L9,1" stroke="#e0504a" stroke-width="1.2"/></svg>
<div class="t" style="left:975.00px;top:208.52px;font-size:8.6px;color:#e8e8e8;transform:scaleX(0.969);font-family:"Liberation Sans",sans-serif;">Айзада Иетилеуова</div>
<div class="a" style="left:1111px;top:205.5px;width:55px;height:13.25px;background:rgba(40,40,40,.78);"></div>
<div class="t" style="left:1114.50px;top:208.52px;font-size:8.6px;color:#e8e8e8;transform:scaleX(0.989);font-family:"Liberation Sans",sans-serif;">Мейрамкуль</div>
<div class="a" style="left:960px;top:292.5px;width:103px;height:12.5px;background:rgba(40,40,40,.78);"></div>
<svg class="a" style="left:962px;top:293.5px" width="10" height="11" viewBox="0 0 10 11"><rect x="3" y="0.5" width="4" height="6.5" rx="2" fill="#e0504a"/><path d="M1.5,5 a3.5,3.5 0 0 0 7,0 M5,8.5 v2 M2.5,10.5 h5" fill="none" stroke="#e0504a" stroke-width="1"/><path d="M1,10 L9,1" stroke="#e0504a" stroke-width="1.2"/></svg>
<div class="t" style="left:974.50px;top:294.52px;font-size:8.6px;color:#e8e8e8;transform:scaleX(1.011);font-family:"Liberation Sans",sans-serif;">Эльмира Кулбековна</div>
<svg class="a" style="left:1113px;top:293px" width="10" height="11" viewBox="0 0 10 11"><rect x="3" y="0.5" width="4" height="6.5" rx="2" fill="#e0504a"/><path d="M1.5,5 a3.5,3.5 0 0 0 7,0 M5,8.5 v2 M2.5,10.5 h5" fill="none" stroke="#e0504a" stroke-width="1"/><path d="M1,10 L9,1" stroke="#e0504a" stroke-width="1.2"/></svg>
<div class="t" style="left:1145.00px;top:258.87px;font-size:9.6px;font-weight:700;color:#ffffff;transform:scaleX(1.031);font-family:"Liberation Sans",sans-serif;">Марина  Солов...</div>
</body></html>
